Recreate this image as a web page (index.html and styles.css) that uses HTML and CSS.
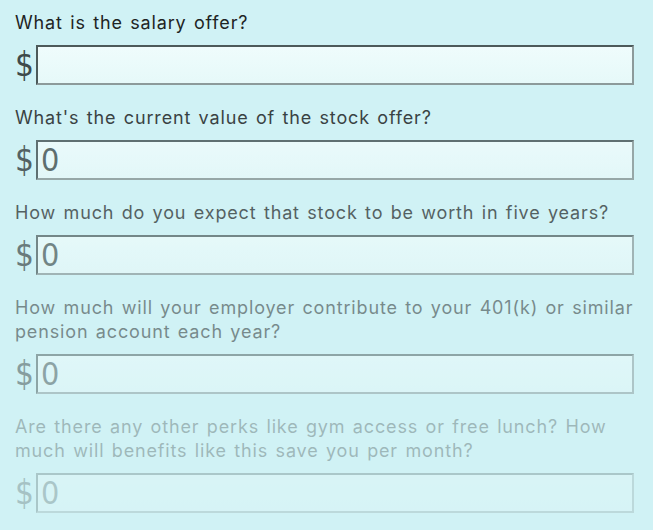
FILE: index.html
```html
<!DOCTYPE html>
<html lang="en">
<head>
    <meta charset="UTF-8">
    <meta name="viewport" content="width=device-width, initial-scale=1.0">
    <title>Offer Calculator</title>
    <link rel="stylesheet" href="styles.css">
</head>
<body>
    <form class="offer-form">
        <div class="question step-1">
            <label for="salary">What is the salary offer?</label>
            <div class="money">
                <span class="currency">$</span>
                <input type="text" id="salary" value="">
            </div>
        </div>
        <div class="question step-2">
            <label for="stock">What's the current value of the stock offer?</label>
            <div class="money">
                <span class="currency">$</span>
                <input type="text" id="stock" value="0">
            </div>
        </div>
        <div class="question step-3">
            <label for="stock-future">How much do you expect that stock to be worth in five years?</label>
            <div class="money">
                <span class="currency">$</span>
                <input type="text" id="stock-future" value="0">
            </div>
        </div>
        <div class="question step-4">
            <label for="pension">How much will your employer contribute to your 401(k) or similar pension account each year?</label>
            <div class="money">
                <span class="currency">$</span>
                <input type="text" id="pension" value="0">
            </div>
        </div>
        <div class="question step-5">
            <label for="perks">Are there any other perks like gym access or free lunch? How much will benefits like this save you per month?</label>
            <div class="money">
                <span class="currency">$</span>
                <input type="text" id="perks" value="0">
            </div>
        </div>
    </form>
</body>
</html>
```

FILE: styles.css
```css
body {
    margin: 0;
    padding: 0;
    background-color: #d0f2f5;
    font-family: "Inter", "Liberation Sans", sans-serif;
    color: #1e2424;
}

.offer-form {
    padding: 11px 19px 0 15px;
}

.question {
    margin-bottom: 21px;
}

.question label {
    display: block;
    font-size: 18px;
    line-height: 24px;
    letter-spacing: 0.85px;
    word-spacing: 1.5px;
    margin-bottom: 10px;
}

.money {
    display: flex;
    align-items: center;
    gap: 5px;
    height: 40px;
}

.currency {
    font-family: "Liberation Sans Narrow", "DejaVu Sans Condensed", sans-serif;
    font-size: 33px;
    line-height: 40px;
    color: #3e4a4a;
    width: 16px;
}

.money input {
    flex: 1;
    min-width: 0;
    margin: 0;
    height: 40px;
    box-sizing: border-box;
    padding: 0 3px;
    border: 2px solid;
    border-color: #4c5a5a #8c9a9a #8c9a9a #4c5a5a;
    background: linear-gradient(#effcfc, #e6f9f9);
    font-family: "Liberation Sans Narrow", "DejaVu Sans Condensed", sans-serif;
    font-size: 32px;
    color: #4a5757;
    outline: none;
}

/* later questions fade out */
.step-2 { opacity: 0.85; }
.step-3 { opacity: 0.7; }
.step-4 { opacity: 0.5; }
.step-5 { opacity: 0.28; }
```
